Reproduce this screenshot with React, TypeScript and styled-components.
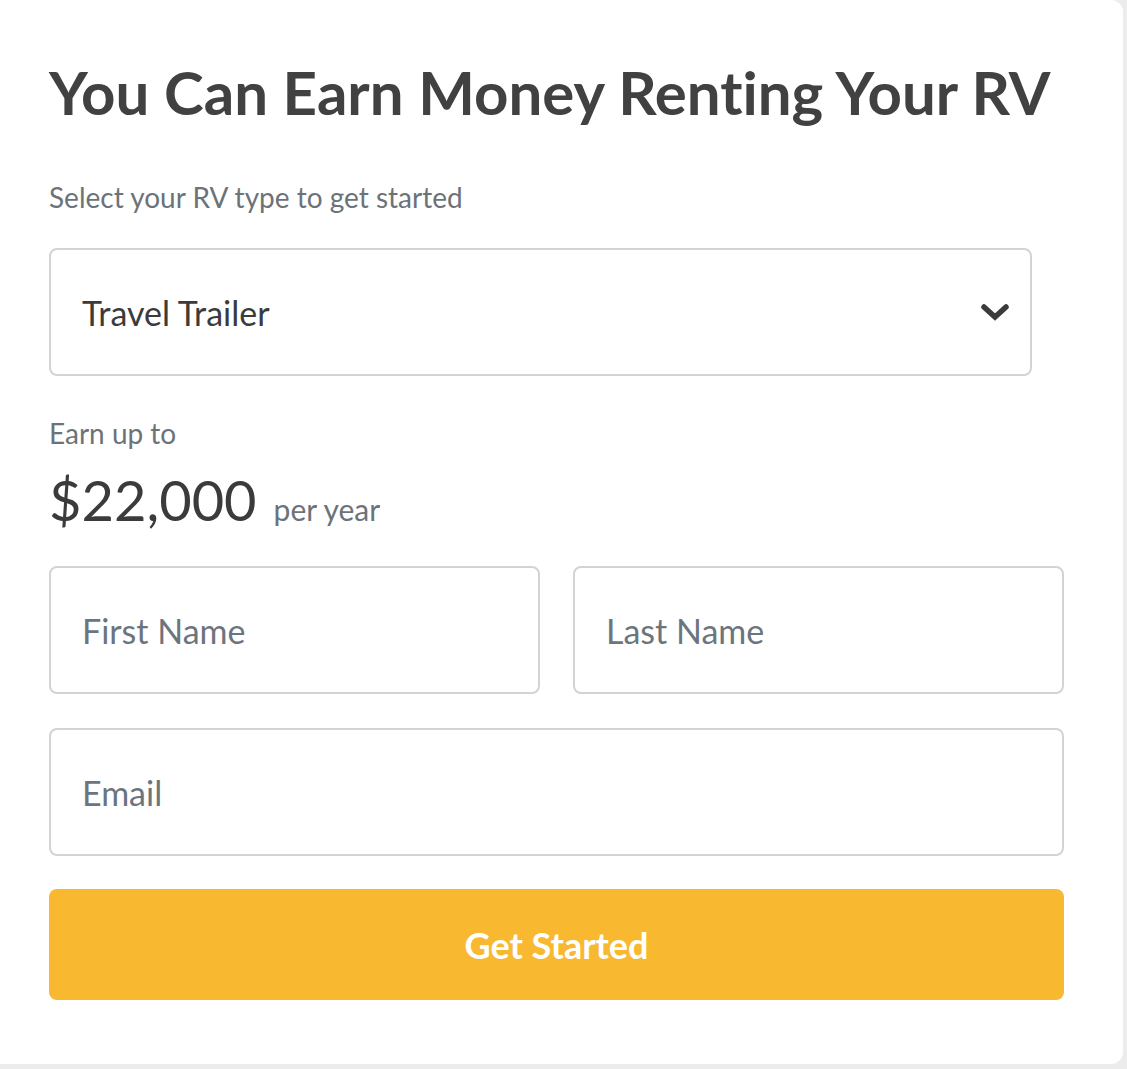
import React, { useState } from 'react';
import styled, { createGlobalStyle } from 'styled-components';

const GlobalStyle = createGlobalStyle`
    body {
        margin: 0;
        background-color: #ececec;
        font-family: Lato, "Open Sans", sans-serif;
        font-variant-ligatures: none;
    }
    * {
        box-sizing: border-box;
    }
`

const Card = styled.div`
    width: 1123px;
    height: 1064px;
    background-color: #ffffff;
    border-radius: 0 12px 12px 0;
    padding: 56px 59px 0 49px;
    display: flex;
    flex-direction: column;
`

const Title = styled.h1`
    margin: 0;
    font-size: 60px;
    line-height: 72px;
    font-weight: 700;
    color: #414141;
    letter-spacing: 0;
    font-variant-ligatures: none;
`

const Label = styled.p<{ $top: number }>`
    margin: ${(p) => p.$top}px 0 0 0;
    font-size: 28px;
    line-height: 34px;
    color: #6c7378;
`

const SelectBox = styled.div`
    margin-top: 34px;
    width: 983px;
    height: 128px;
    border: 2px solid #d3d3d3;
    border-radius: 8px;
    display: flex;
    align-items: center;
    justify-content: space-between;
    padding: 0 20px 0 31px;
    font-size: 34px;
    color: #3b3b3b;
    cursor: pointer;
`

const PriceRow = styled.div`
    display: flex;
    align-items: baseline;
    gap: 17px;
    margin-top: 10px;
`

const Price = styled.span`
    font-size: 56px;
    line-height: 80px;
    color: #3b3b3b;
`

const PerYear = styled.span`
    font-size: 30px;
    color: #6c7378;
`

const FieldRow = styled.div<{ $top: number }>`
    display: flex;
    gap: 33px;
    margin-top: ${(p) => p.$top}px;
`

const Field = styled.input`
    flex: 1;
    min-width: 0;
    height: 128px;
    border: 2px solid #d3d3d3;
    border-radius: 8px;
    padding: 0 31px;
    font-family: Lato, "Open Sans", sans-serif;
    font-size: 34px;
    color: #3b3b3b;
    outline: none;

    &::placeholder {
        color: #6c757d;
    }
`

const Button = styled.button`
    margin-top: 33px;
    height: 111px;
    border: none;
    border-radius: 8px;
    background-color: #f8b830;
    color: #ffffff;
    font-family: Lato, "Open Sans", sans-serif;
    font-size: 36px;
    font-weight: 700;
    cursor: pointer;
`

const Chevron = () => (
    <svg width="30" height="22" viewBox="0 0 30 22">
        <path d="M4 6 L15 16 L26 6" fill="none" stroke="#3b3b3b" strokeWidth="5.5" strokeLinecap="round" strokeLinejoin="miter" />
    </svg>
)

const App = () => {
    const [rvType] = useState('Travel Trailer')

    return (
        <>
            <GlobalStyle />
            <Card>
                <Title>You Can Earn Money Renting Your RV</Title>
                <Label $top={52}>Select your RV type to get started</Label>
                <SelectBox>
                    <span>{rvType}</span>
                    <Chevron />
                </SelectBox>
                <Label $top={40}>Earn up to</Label>
                <PriceRow>
                    <Price>$22,000</Price>
                    <PerYear>per year</PerYear>
                </PriceRow>
                <FieldRow $top={26}>
                    <Field placeholder="First Name" />
                    <Field placeholder="Last Name" />
                </FieldRow>
                <FieldRow $top={34}>
                    <Field placeholder="Email" />
                </FieldRow>
                <Button>Get Started</Button>
            </Card>
        </>
    )
}

export default App;
